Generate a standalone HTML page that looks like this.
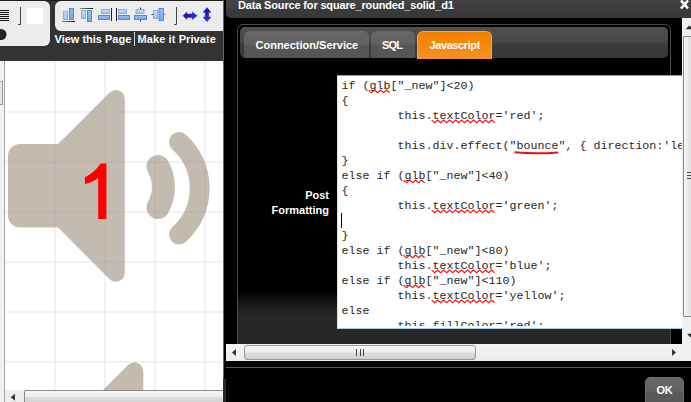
<!DOCTYPE html>
<html><head><meta charset="utf-8">
<style>
*{margin:0;padding:0;box-sizing:border-box}
html,body{width:691px;height:402px;overflow:hidden;background:#333;font-family:"Liberation Sans",sans-serif}
.a{position:absolute}
.ui{font-family:"Liberation Sans",sans-serif;font-weight:bold;font-size:11px;color:#fff;white-space:pre}
</style></head><body>
<!-- toolbar panels -->
<div class="a" style="left:0;top:0;width:223px;height:1px;background:#1c1c1c"></div>
<div class="a" style="left:0;top:1px;width:50px;height:45px;background:#ececec;border-radius:0 6px 6px 0"></div>
<div class="a" style="left:55px;top:1px;width:168px;height:29.5px;background:#ececec;border-radius:6px 0 0 6px"></div>
<svg class="a" style="left:0;top:0" width="222" height="50">
 <defs>
  <linearGradient id="bl" x1="0" y1="0" x2="0" y2="1"><stop offset="0" stop-color="#c4dcfc"/><stop offset="1" stop-color="#a2c2f4"/></linearGradient>
  <linearGradient id="bd" x1="0" y1="0" x2="0" y2="1"><stop offset="0" stop-color="#9cbcf0"/><stop offset="1" stop-color="#7ca2e4"/></linearGradient>
  <linearGradient id="ah" x1="0" y1="0" x2="1" y2="0"><stop offset="0" stop-color="#10109a"/><stop offset="1" stop-color="#3434dc"/></linearGradient><linearGradient id="av" x1="0" y1="0" x2="0" y2="1"><stop offset="0" stop-color="#10109a"/><stop offset="1" stop-color="#3434dc"/></linearGradient>
  <linearGradient id="ln" x1="0" y1="0" x2="1" y2="0"><stop offset="0" stop-color="#888"/><stop offset="1" stop-color="#111"/></linearGradient>
 </defs>
 <g fill="#111"><rect x="0" y="10" width="9" height="1"/><rect x="0" y="12" width="9" height="1"/><rect x="0" y="14" width="9" height="1"/><rect x="0" y="16" width="9" height="1"/><rect x="0" y="18" width="9" height="1"/><rect x="0" y="20" width="9" height="1"/></g>
 <path d="M20.5,7 V24.5 H18" stroke="#444" stroke-width="1" fill="none"/>
 <rect x="27" y="8" width="16" height="16" fill="#fff"/>
 <circle cx="1" cy="34.5" r="5.5" fill="#222"/>
 <!-- align bottom -->
 <rect x="63.5" y="11.5" width="4" height="8" fill="url(#bl)" stroke="#86b0f0"/>
 <rect x="69.5" y="8.5" width="4" height="11" fill="url(#bd)" stroke="#5a86dc"/>
 <rect x="62" y="21" width="13" height="1" fill="url(#ln)"/>
 <!-- align top -->
 <rect x="80" y="8" width="13" height="1" fill="url(#ln)"/>
 <rect x="81.5" y="10.5" width="4" height="8" fill="url(#bl)" stroke="#86b0f0"/>
 <rect x="87.5" y="10.5" width="4" height="11" fill="url(#bd)" stroke="#5a86dc"/>
 <!-- align right -->
 <rect x="101.5" y="9.5" width="8" height="4" fill="url(#bl)" stroke="#86b0f0"/>
 <rect x="98.5" y="15.5" width="11" height="4" fill="url(#bd)" stroke="#5a86dc"/>
 <rect x="111" y="8" width="1" height="13" fill="#222"/>
 <!-- align left -->
 <rect x="116" y="8" width="1" height="13" fill="#222"/>
 <rect x="118.5" y="9.5" width="8" height="4" fill="url(#bl)" stroke="#86b0f0"/>
 <rect x="118.5" y="15.5" width="11" height="4" fill="url(#bd)" stroke="#5a86dc"/>
 <!-- align center -->
 <rect x="136" y="9.5" width="8" height="4" fill="url(#bl)" stroke="#86b0f0"/>
 <rect x="134.5" y="15.5" width="12" height="4" fill="url(#bd)" stroke="#5a86dc"/>
 <rect x="140" y="7.5" width="1" height="1.5" fill="#333"/><rect x="140" y="20" width="1" height="1.5" fill="#333"/>
 <!-- align middle -->
 <rect x="153.5" y="10.5" width="4" height="8" fill="url(#bl)" stroke="#86b0f0"/>
 <rect x="159" y="8.5" width="4.5" height="12" fill="url(#bd)" stroke="#5a86dc"/>
 <rect x="151.5" y="14" width="1.5" height="1" fill="#333"/><rect x="164" y="14" width="1.5" height="1" fill="#333"/>
 <rect x="164.5" y="1" width="1" height="29" fill="#f2f2f2"/>
 <!-- bracket -->
 <path d="M176.5,7 V24.5 H174" stroke="#444" stroke-width="1" fill="none"/>
 <!-- double arrows -->
 <path d="M183,15.7 L186.8,11.9 L186.8,14 L192.2,14 L192.2,11.9 L197.2,15.7 L192.2,19.6 L192.2,17.6 L186.8,17.6 L186.8,19.6 Z" fill="url(#ah)" stroke="#2020b8" stroke-width="0.4"/>
 <path d="M207,7.6 L211,12.3 L208.8,12.3 L208.8,17 L211,17 L207,21.7 L203,17 L205.2,17 L205.2,12.3 L203,12.3 Z" fill="url(#av)" stroke="#2020b8" stroke-width="0.4"/>
</svg>
<div class="a ui" style="left:54.5px;top:33px">View this Page</div>
<div class="a" style="left:134px;top:32px;width:1px;height:14px;background:#d8d8d8"></div>
<div class="a ui" style="left:137.5px;top:33px;letter-spacing:0.1px">Make it Private</div>

<!-- canvas -->
<div class="a" style="left:0;top:61px;width:223px;height:341px;background:#fff"></div>
<svg class="a" style="left:0;top:0" width="223" height="402">
 <g fill="#c4bbb0">
  <path id="spk" d="M8,156 A12,12 0 0 1 20,144 L58,144 L109.6,92.6 A9,9 0 0 1 124.8,99 L124.8,272.8 A9,9 0 0 1 109.6,279.2 L58,227.5 L20,227.5 A12,12 0 0 1 8,215.5 Z"/>
  <use href="#spk" transform="translate(18.5,272.3)"/>
 </g>
 <g fill="none" stroke="#c4bbb0" stroke-linecap="round">
  <path stroke-width="23" d="M158,166.5 A41.6,41.6 0 0 1 158,207.5"/>
  <path stroke-width="20" d="M179,142 A62.1,62.1 0 0 1 179,234.5"/>
 </g>
 <g fill="#7e7e9c" fill-opacity="0.1">
  <rect x="54" y="61" width="2" height="341"/><rect x="104" y="61" width="2" height="341"/><rect x="154" y="61" width="2" height="341"/><rect x="204" y="61" width="2" height="341"/>
  <rect x="0" y="111" width="223" height="2"/>
  <rect x="0" y="161" width="223" height="2"/>
  <rect x="0" y="211" width="223" height="2"/>
  <rect x="0" y="261" width="223" height="2"/>
  <rect x="0" y="311" width="223" height="2"/>
  <rect x="0" y="361" width="223" height="2"/>
 </g>
 <path fill="#ff0000" d="M106.4,163.4 L106.4,219 L98.2,219 L98.2,178 C94,181.5 89,183 84.9,184 L84.9,177 C90,175 96,170 100.5,163.4 Z"/>
</svg>
<div class="a" style="left:0;top:61px;width:4px;height:341px;background:#f0f0f0"></div>
<div class="a" style="left:4px;top:61px;width:1px;height:341px;background:#a8a8a8"></div>
<div class="a" style="left:0;top:81px;width:3px;height:24px;background:#e4e4e4;border:1px solid #999;border-left:none"></div>
<div class="a" style="left:5px;top:390px;width:218px;height:12px;background:#ededed"></div>
<div class="a" style="left:23.5px;top:390.3px;width:202px;height:14px;background:linear-gradient(#f6f6f6,#ececec 45%,#dcdcdc 55%,#d4d4d4);border:1px solid #8a8a8a;border-radius:2px"></div>
<svg class="a" style="left:0;top:388px" width="20" height="14"><path d="M10.7,9.3 L15,5.8 L15,12.7 Z" fill="#333"/></svg>
<div class="a" style="left:223px;top:0;width:1px;height:402px;background:#666"></div>
<div class="a" style="left:224px;top:0;width:2px;height:379px;background:#000"></div>
<div class="a" style="left:223px;top:379px;width:3px;height:23px;background:#2a2a2a"></div>

<!-- dialog -->
<div class="a" style="left:226px;top:0;width:465px;height:402px;background:#000"></div>
<div class="a" style="left:226px;top:0;width:465px;height:17.5px;background:linear-gradient(#434343,#3f3f3f 45%,#3a3a3a 55%,#393939);border-radius:0 0 0 5px"></div>
<div class="a ui" style="left:238px;top:-1px;letter-spacing:-0.16px">Data Source for square_rounded_solid_d1</div>
<svg class="a" style="left:679px;top:0" width="12" height="11"><path d="M2,0.5 L9,8.5 M9,0.5 L2,8.5" stroke="#fff" stroke-width="2.6"/></svg>

<!-- content panel -->
<div class="a" style="left:237px;top:24px;width:434px;height:330px;border:1px solid #4a4a4a;border-radius:6px;background:linear-gradient(#000 0,#000 266px,#171717 278px,#232323 286px,#272727 292px,#272727)"></div>
<div class="a" style="left:240px;top:26.5px;width:428px;height:31.5px;border-radius:5px;background:linear-gradient(#505050,#474747 50%,#3c3c3c 52%,#383838)"></div>
<div class="a" style="left:244px;top:31px;width:125px;height:27px;border-radius:6px 6px 0 0;background:linear-gradient(#686868,#606060 50%,#575757 52%,#555)"></div>
<div class="a ui" style="left:255.5px;top:38.8px">Connection/Service</div>
<div class="a" style="left:371px;top:31px;width:44px;height:27px;border-radius:6px 6px 0 0;background:linear-gradient(#686868,#606060 50%,#575757 52%,#555)"></div>
<div class="a ui" style="left:382px;top:38.8px;letter-spacing:-0.8px">SQL</div>
<div class="a" style="left:417px;top:31px;width:75px;height:28px;border-radius:6px 6px 0 0;background:linear-gradient(#f28000,#f5870c 50%,#f6922a);border:1px solid #ffa820;border-bottom:none"></div>
<div class="a ui" style="left:429.5px;top:38.7px;letter-spacing:-0.4px">Javascript</div>

<div class="a ui" style="left:260px;top:188px;width:69px;text-align:right;line-height:15px">Post
Formatting</div>

<!-- textarea -->
<div class="a" style="left:337px;top:75px;width:345px;height:254px;background:#fff;border:1px solid #cfe3f7;border-top-color:#6ea8e2;border-bottom-color:#a6cef2;border-right:none;overflow:hidden">
<div style="position:absolute;left:0;top:0;width:344px;height:250px;overflow:hidden"><pre id="code" style="position:absolute;left:3.6px;top:3px;font-family:'Liberation Mono',monospace;font-size:11.67px;line-height:15px;color:#262626">if (glb["_new"]&lt;20)
{
        this.textColor='red';

        this.div.effect("bounce", { direction:'left' });
}
else if (glb["_new"]&lt;40)
{
        this.textColor='green';

}
else if (glb["_new"]&lt;80)
        this.textColor='blue';
else if (glb["_new"]&lt;110)
        this.textColor='yellow';
else
        this.fillColor='red';</pre></div>
</div>
<svg class="a" style="left:0;top:0" width="691" height="402"><defs><clipPath id="tc"><rect x="338" y="76" width="344" height="250"/></clipPath></defs><g clip-path="url(#tc)"><g fill="none" stroke="#ff1010" stroke-width="1.2"><polyline points="368.6,90.1 371.6,92.7 374.6,90.1 377.6,92.7 380.6,90.1 383.6,92.7 386.6,90.1 389.6,92.7"/><polyline points="431.6,120.1 434.6,122.7 437.6,120.1 440.6,122.7 443.6,120.1 446.6,122.7 449.6,120.1 452.6,122.7 455.6,120.1 458.6,122.7 461.6,120.1 464.6,122.7 467.6,120.1 470.6,122.7 473.6,120.1 476.6,122.7 479.6,120.1 482.6,122.7 485.6,120.1 488.6,122.7 491.6,120.1 494.6,122.7"/><polyline points="403.6,180.1 406.6,182.7 409.6,180.1 412.6,182.7 415.6,180.1 418.6,182.7 421.6,180.1 424.6,182.7"/><polyline points="431.6,210.1 434.6,212.7 437.6,210.1 440.6,212.7 443.6,210.1 446.6,212.7 449.6,210.1 452.6,212.7 455.6,210.1 458.6,212.7 461.6,210.1 464.6,212.7 467.6,210.1 470.6,212.7 473.6,210.1 476.6,212.7 479.6,210.1 482.6,212.7 485.6,210.1 488.6,212.7 491.6,210.1 494.6,212.7"/><polyline points="403.6,255.1 406.6,257.7 409.6,255.1 412.6,257.7 415.6,255.1 418.6,257.7 421.6,255.1 424.6,257.7"/><polyline points="431.6,270.1 434.6,272.7 437.6,270.1 440.6,272.7 443.6,270.1 446.6,272.7 449.6,270.1 452.6,272.7 455.6,270.1 458.6,272.7 461.6,270.1 464.6,272.7 467.6,270.1 470.6,272.7 473.6,270.1 476.6,272.7 479.6,270.1 482.6,272.7 485.6,270.1 488.6,272.7 491.6,270.1 494.6,272.7"/><polyline points="403.6,285.1 406.6,287.7 409.6,285.1 412.6,287.7 415.6,285.1 418.6,287.7 421.6,285.1 424.6,287.7"/><polyline points="431.6,300.1 434.6,302.7 437.6,300.1 440.6,302.7 443.6,300.1 446.6,302.7 449.6,300.1 452.6,302.7 455.6,300.1 458.6,302.7 461.6,300.1 464.6,302.7 467.6,300.1 470.6,302.7 473.6,300.1 476.6,302.7 479.6,300.1 482.6,302.7 485.6,300.1 488.6,302.7 491.6,300.1 494.6,302.7"/><polyline points="431.6,330.1 434.6,332.7 437.6,330.1 440.6,332.7 443.6,330.1 446.6,332.7 449.6,330.1 452.6,332.7 455.6,330.1 458.6,332.7 461.6,330.1 464.6,332.7 467.6,330.1 470.6,332.7 473.6,330.1 476.6,332.7 479.6,330.1 482.6,332.7 485.6,330.1 488.6,332.7 491.6,330.1 494.6,332.7"/></g><path d="M514.5,152.2 Q536,154.2 558,152.4" stroke="#e81010" stroke-width="2" fill="none"/></g></svg>
<div class="a" style="left:341px;top:213px;width:1px;height:15px;background:#000"></div>

<!-- below textarea -->
<div class="a" style="left:671px;top:328.5px;width:11px;height:15.5px;background:#000"></div>

<!-- vertical scrollbar -->
<div class="a" style="left:682px;top:17.5px;width:9px;height:326.5px;background:#efefef"></div>
<div class="a" style="left:683px;top:36px;width:8px;height:280.5px;background:linear-gradient(90deg,#f6f6f6,#ececec 50%,#dedede);border:1px solid #8a8a8a;border-right:none;border-radius:2px 0 0 2px"></div>
<div class="a" style="left:687px;top:172px;width:4px;height:1px;background:#444"></div><div class="a" style="left:687px;top:175px;width:4px;height:1px;background:#444"></div><div class="a" style="left:687px;top:178px;width:4px;height:1px;background:#444"></div>

<!-- horizontal scrollbar -->
<div class="a" style="left:226px;top:344px;width:456px;height:17px;background:linear-gradient(#f4f4f4,#ececec)"></div>
<div class="a" style="left:244px;top:345px;width:231.5px;height:15px;background:linear-gradient(#f6f6f6,#ededed 45%,#dddddd 55%,#d2d2d2);border:1px solid #989898;border-radius:3px"></div>
<div class="a" style="left:356px;top:349px;width:1px;height:6.5px;background:#444"></div>
<div class="a" style="left:359.5px;top:349px;width:1px;height:6.5px;background:#444"></div>
<div class="a" style="left:363px;top:349px;width:1px;height:6.5px;background:#444"></div>
<svg class="a" style="left:226px;top:344px" width="17" height="17"><path d="M6,8.5 L10,5 L10,12 Z" fill="#333"/></svg>
<svg class="a" style="left:665px;top:344px" width="17" height="17"><path d="M11,8.5 L7,5 L7,12 Z" fill="#333"/></svg>
<div class="a" style="left:682px;top:344px;width:9px;height:17px;background:#f0f0f0"></div>
<svg class="a" style="left:682px;top:17px" width="9" height="330"><path d="M3.5,12.2 L7.4,8.4 L11.3,12.2 Z" fill="#2a2a2a"/><path d="M5,316.8 L8.6,320.4 L12.2,316.8 Z" fill="#2a2a2a"/></svg>

<div class="a" style="left:226px;top:367px;width:465px;height:1px;background:#555"></div>
<div class="a" style="left:645px;top:377px;width:39px;height:30px;border-radius:5px;background:linear-gradient(#686868,#636363 46%,#5a5a5a 50%,#565656);border:1px solid #6e6e6e"></div>
<div class="a ui" style="left:656.5px;top:384px;letter-spacing:-0.3px">OK</div>
</body></html>
